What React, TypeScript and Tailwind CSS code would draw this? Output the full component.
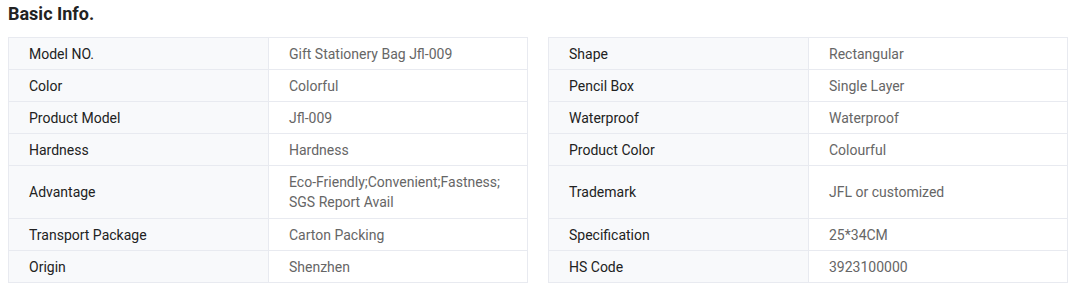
import React from "react";

type Row = { label: string; value: React.ReactNode; tall?: boolean };

const left: Row[] = [
  { label: "Model NO.", value: "Gift Stationery Bag Jfl-009" },
  { label: "Color", value: "Colorful" },
  { label: "Product Model", value: "Jfl-009" },
  { label: "Hardness", value: "Hardness" },
  {
    label: "Advantage",
    value: (
      <>
        Eco-Friendly;Convenient;Fastness;
        <br />
        SGS Report Avail
      </>
    ),
    tall: true,
  },
  { label: "Transport Package", value: "Carton Packing" },
  { label: "Origin", value: "Shenzhen" },
];

const right: Row[] = [
  { label: "Shape", value: "Rectangular" },
  { label: "Pencil Box", value: "Single Layer" },
  { label: "Waterproof", value: "Waterproof" },
  { label: "Product Color", value: "Colourful" },
  { label: "Trademark", value: "JFL or customized", tall: true },
  { label: "Specification", value: "25*34CM" },
  { label: "HS Code", value: "3923100000" },
];

function Table({ rows }: { rows: Row[] }) {
  return (
    <div className="w-[520px] border-l border-r border-t border-[#e8eaf0]">
      {rows.map((r) => (
        <div
          key={r.label}
          className={`grid grid-cols-[260px_1fr] border-b border-[#e8eaf0] ${
            r.tall ? "h-[53px]" : "h-[32px]"
          }`}
        >
          <div className="flex items-center border-r border-[#e8eaf0] bg-[#f8f9fb] pl-[20px] text-[14px] leading-[20px] text-[#222222]">
            {r.label}
          </div>
          <div className="flex items-center pl-[20px] text-[14px] leading-[20px] text-[#666666]">
            <div>{r.value}</div>
          </div>
        </div>
      ))}
    </div>
  );
}

export default function App() {
  return (
    <div
      className="w-[1085px] h-[292px] bg-white pl-[8px] pt-[2px]"
      style={{ fontFamily: "Roboto, 'Liberation Sans', sans-serif" }}
    >
      <h2 className="text-[18px] font-bold leading-[24px] text-[#222222] mb-[11px]">
        Basic Info.
      </h2>
      <div className="flex gap-[20px]">
        <Table rows={left} />
        <Table rows={right} />
      </div>
    </div>
  );
}
